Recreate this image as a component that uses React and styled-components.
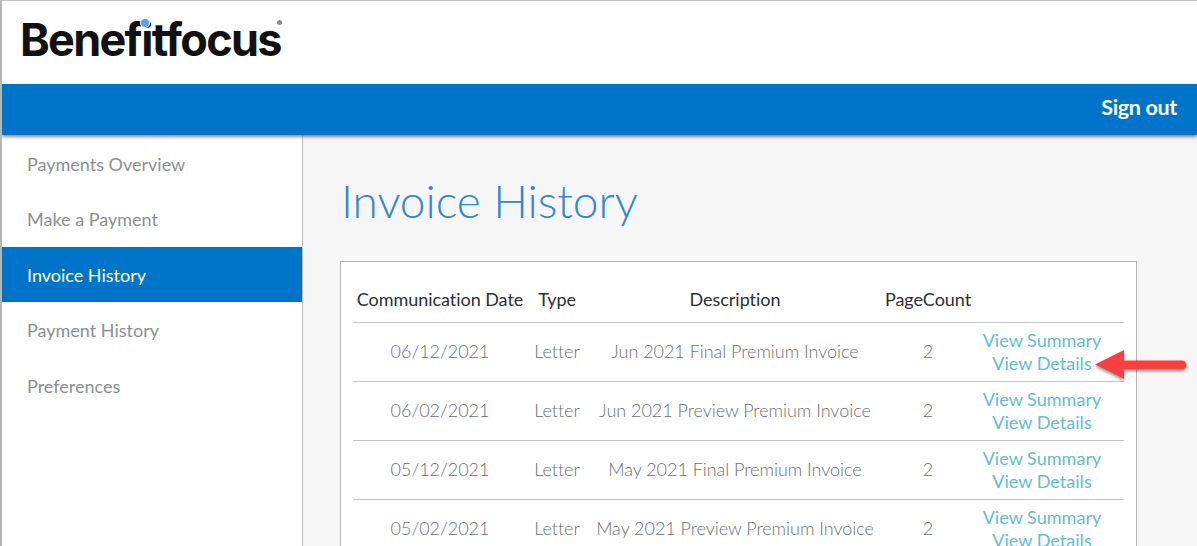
import React from "react";
import styled, { createGlobalStyle } from "styled-components";

const Global = createGlobalStyle`
  html, body { margin: 0; padding: 0; height: 546px; overflow: hidden; background: #fff; }
  body { font-family: "Lato", "Liberation Sans", sans-serif; }
  * { box-sizing: border-box; }
`;
const Page = styled.div`
  position: relative; width: 1197px; height: 546px; overflow: hidden;
  border-top: 1px solid #c4c4c4; border-left: 2px solid #b4b8b4;
  display: flex; flex-direction: column; background: #fff;
`;
const Header = styled.header`height: 83px; padding: 17px 0 0 18px; flex: none;`;
const Logo = styled.div`
  position: relative; display: inline-block;
  font-family: "Inter", "Liberation Sans", sans-serif; font-weight: 700; font-size: 45px;
  line-height: 44px; letter-spacing: -1.7px; color: #111;
`;
const LogoDot = styled.span`
  position: absolute; left: 121px; top: 1px; width: 8px; height: 8px;
  border-radius: 50%; background: #5b9df0; box-shadow: 0 0 0 1px #fff;
`;
const LogoMark = styled.span`
  position: absolute; left: 257px; top: 2px; width: 5px; height: 5px;
  border-radius: 50%; background: #8a8a8a;
`;
const TopBar = styled.div`
  position: relative; z-index: 2; flex: none; height: 51px; background: #0074c8;
  box-shadow: 0 2px 3px rgba(0,0,0,.45); display: flex; justify-content: flex-end; align-items: center;
  padding: 0 20px 6px 0;
`;
const SignOut = styled.a`color: #fff; font-size: 21.5px; font-weight: 700; letter-spacing: -.33px;`;
const Body = styled.div`flex: 1; display: flex; min-height: 0;`;
const Sidebar = styled.nav`
  width: 301px; flex: none; background: #fff; border-right: 1px solid #b9bdbb; padding-top: 1px;
`;
const NavItem = styled.a`
  display: flex; align-items: center; height: ${p => (p.$active ? "55px" : "55.5px")};
  margin-bottom: ${p => (p.$active ? ".5px" : "0")};
  padding-left: 25px; font-size: 18px; font-weight: 400; letter-spacing: 0;
  color: ${p => (p.$active ? "#fff" : "#8a8f90")};
  background: ${p => (p.$active ? "#0074c8" : "transparent")};
`;
const Main = styled.main`flex: 1; background: #f6f6f6; padding: 37px 0 0 37px; min-width: 0;`;
const Title = styled.h1`
  margin: 0 0 31px 1px; font-size: 46px; line-height: 58px; font-weight: 300; letter-spacing: -.05px; color: #2f86d6;
`;
const Card = styled.section`
  width: 797px; background: #fff; border: 1px solid #b5b5b5; padding: 20px 12px 0;
`;
const Table = styled.table`
  width: 771px; border-collapse: collapse; table-layout: fixed; font-size: 18px;
`;
const Th = styled.th`
  font-weight: 400; height: 40px; padding: 0 0 6px; color: #2b2f33; text-align: center; letter-spacing: -.05px;
  white-space: nowrap; border-bottom: 1px solid #c6c6c6;
`;
const Td = styled.td`
  height: 59px; padding: 0; color: #6c6f70; text-align: center; white-space: nowrap; font-weight: 300;
  letter-spacing: -.03px; border-bottom: 1px solid #c6c6c6; padding-bottom: 2px;
`;
const LinkTd = styled(Td)`padding-right: 13px; line-height: 23px; padding-bottom: 0;`;
const ViewLink = styled.a`display: block; color: #62bcdc; font-weight: 400; letter-spacing: .03px;`;
const Arrow = styled.svg`position: absolute; left: 1090px; top: 343px; overflow: visible;`;

const rows = [
  ["06/12/2021", "Jun 2021 Final Premium Invoice"],
  ["06/02/2021", "Jun 2021 Preview Premium Invoice"],
  ["05/12/2021", "May 2021 Final Premium Invoice"],
  ["05/02/2021", "May 2021 Preview Premium Invoice"],
];
const nav = ["Payments Overview", "Make a Payment", "Invoice History", "Payment History", "Preferences"];

export default function App() {
  return (
    <Page>
      <Global />
      <Header>
        <Logo>Benefitfocus<LogoDot /><LogoMark /></Logo>
      </Header>
      <TopBar><SignOut>Sign out</SignOut></TopBar>
      <Body>
        <Sidebar>
          {nav.map(n => <NavItem key={n} $active={n === "Invoice History"}>{n}</NavItem>)}
        </Sidebar>
        <Main>
          <Title>Invoice History</Title>
          <Card>
            <Table>
              <colgroup>
                <col style={{ width: 174 }} /><col style={{ width: 60 }} /><col style={{ width: 296 }} /><col style={{ width: 90 }} /><col style={{ width: 151 }} />
              </colgroup>
              <thead>
                <tr><Th>Communication Date</Th><Th>Type</Th><Th>Description</Th><Th>PageCount</Th><Th /></tr>
              </thead>
              <tbody>
                {rows.map(r => (
                  <tr key={r[0] + r[1]}>
                    <Td>{r[0]}</Td><Td>Letter</Td><Td>{r[1]}</Td><Td>2</Td>
                    <LinkTd><ViewLink>View Summary</ViewLink><ViewLink>View Details</ViewLink></LinkTd>
                  </tr>
                ))}
              </tbody>
            </Table>
          </Card>
        </Main>
      </Body>
      <Arrow width="100" height="40" viewBox="0 0 100 40">
        <defs>
          <filter id="s" x="-20%" y="-40%" width="140%" height="200%">
            <feDropShadow dx="0" dy="2" stdDeviation="1.5" floodColor="#000" floodOpacity=".4" />
          </filter>
        </defs>
        <path filter="url(#s)" fill="#f8403f" d="M3 20.5 32 6v10.5h58a4.5 4.5 0 0 1 0 9H32V35Z" />
      </Arrow>
    </Page>
  );
}
